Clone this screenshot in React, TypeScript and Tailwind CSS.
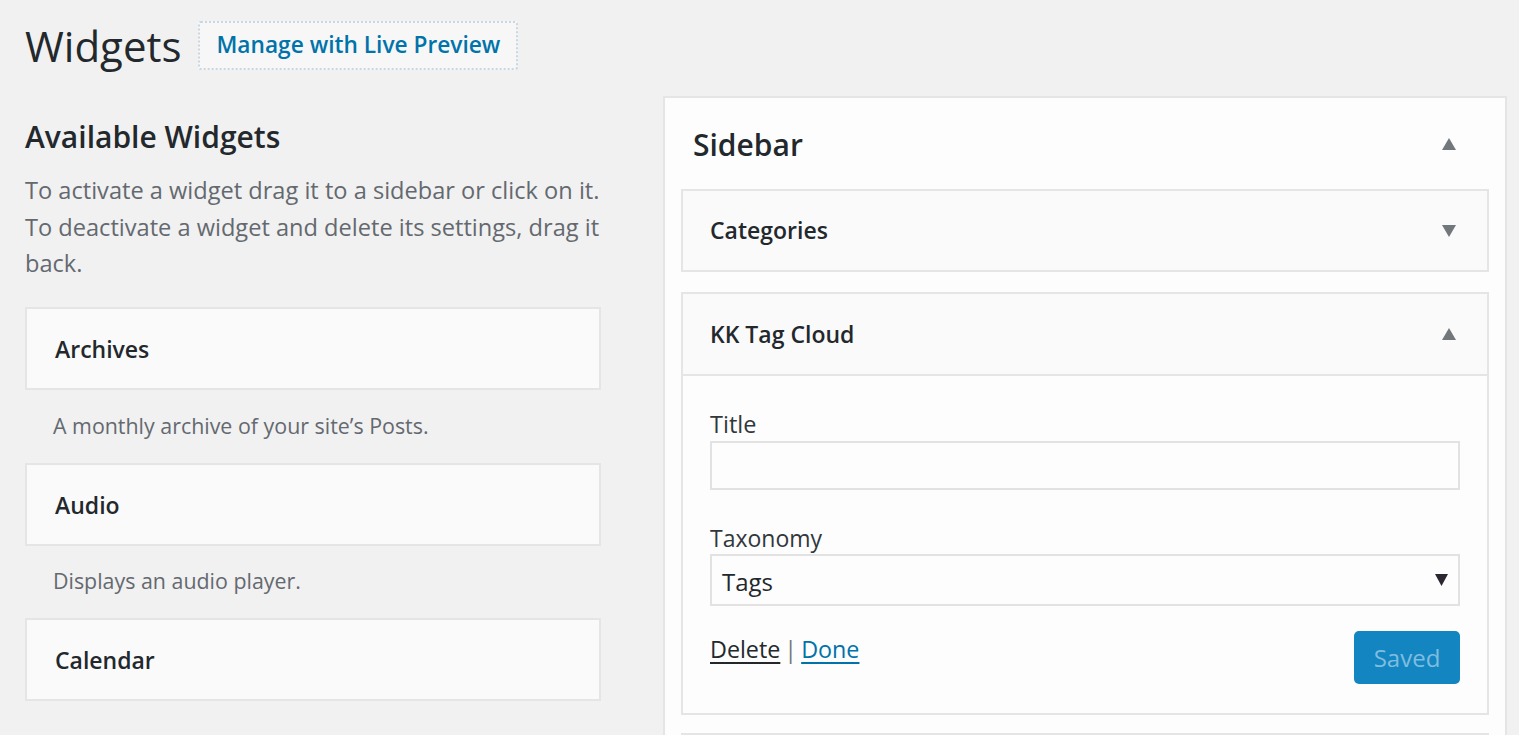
import React from 'react';

function Arrow({ up }: { up?: boolean }) {
  return (
    <svg width="14" height="12" viewBox="0 0 14 12" className="text-[#72777c]">
      {up ? <polygon points="7,0 14,12 0,12" fill="currentColor" /> : <polygon points="0,0 14,0 7,12" fill="currentColor" />}
    </svg>
  );
}

function WidgetCard({ title }: { title: string }) {
  return (
    <div className="h-[83px] border-2 border-[#e5e5e5] bg-[#fafafa] flex items-center px-[28px]">
      <h3 className="text-[23px] font-semibold text-[#23282d] pt-[2px]">{title}</h3>
    </div>
  );
}

export default function App() {
  return (
    <div className="min-h-screen bg-[#f1f1f1] text-[#23282d] font-['Segoe_UI','Open_Sans',sans-serif] overflow-hidden">
      {/* header */}
      <div className="flex items-center gap-[17px] pl-[25px] pt-[21px]">
        <h1 className="text-[42px] leading-[49px] font-normal text-[#23282d]">Widgets</h1>
        <button className="h-[49px] px-[16px] border-2 border-dotted border-[#c8d7e1] bg-[#f7f7f7] text-[#0073aa] text-[22.7px] font-semibold rounded-[3px]">
          Manage with Live Preview
        </button>
      </div>

      <div className="flex items-start">
        {/* available widgets */}
        <div className="w-[576px] ml-[25px] mt-[45px]">
          <h2 className="text-[30px] leading-[44px] font-semibold text-[#23282d]">Available Widgets</h2>
          <p className="mt-[13px] w-[600px] text-[23.6px] leading-[36.5px] text-[#646970]">
            To activate a widget drag it to a sidebar or click on it. To deactivate a widget and delete its settings, drag it back.
          </p>

          <div className="mt-[25px]">
            <WidgetCard title="Archives" />
            <p className="h-[73px] flex items-center pl-[28px] text-[21.4px] text-[#646970]">A monthly archive of your site’s Posts.</p>
            <WidgetCard title="Audio" />
            <p className="h-[72px] flex items-center pl-[28px] text-[21.4px] text-[#646970]">Displays an audio player.</p>
            <WidgetCard title="Calendar" />
          </div>
        </div>

        {/* sidebar panel */}
        <div className="ml-[62px] mt-[26px] w-[844px] border-2 border-[#e5e5e5] bg-[#fdfdfd] px-[16px] pb-[20px]">
          <div className="h-[91px] flex items-center justify-between pl-[12px] pr-[33px]">
            <h2 className="text-[30px] font-semibold text-[#23282d] pt-[2px]">Sidebar</h2>
            <Arrow up />
          </div>

          <div className="h-[83px] border-2 border-[#e5e5e5] bg-[#fafafa] flex items-center justify-between pl-[27px] pr-[31px]">
            <h3 className="text-[23px] font-semibold">Categories</h3>
            <Arrow />
          </div>

          <div className="mt-[20px] border-2 border-[#e5e5e5] bg-[#fdfdfd]">
            <div className="h-[82px] bg-[#fafafa] border-b-2 border-[#e5e5e5] flex items-center justify-between pl-[27px] pr-[31px]">
              <h3 className="text-[23px] font-semibold">KK Tag Cloud</h3>
              <Arrow up />
            </div>
            <div className="px-[27px] pt-[32px] pb-[29px]">
              <label className="block text-[23.5px] leading-[32px] text-[#32373c]">Title</label>
              <div className="mt-[1px] h-[49px] border-2 border-[#e2e2e2] bg-[#fdfdfd]" />

              <label className="block mt-[32px] text-[23px] leading-[32px] text-[#32373c]">Taxonomy</label>
              <div className="h-[52px] border-2 border-[#e2e2e2] bg-[#fdfdfd] flex items-center justify-between pl-[10px] pr-[10px]">
                <span className="text-[24px] text-[#23282d] pt-[4px]">Tags</span>
                <svg width="13" height="12" viewBox="0 0 13 12"><polygon points="0,0 13,0 6.5,12" fill="#2b2630" /></svg>
              </div>

              <div className="mt-[25px] flex items-start justify-between">
                <div className="mt-[3px] text-[23.3px] leading-[30px]">
                  <a className="underline decoration-2 underline-offset-4 text-[#23282d]">Delete</a>
                  <span className="text-[#72777c] mx-[4px]">|</span>
                  <a className="underline decoration-2 underline-offset-4 text-[#0073aa]">Done</a>
                </div>
                <button className="h-[53px] w-[106px] rounded-[5px] bg-[#1385c0] text-[#7fbde0] text-[24px]">Saved</button>
              </div>
            </div>
          </div>

          <div className="mt-[18px] h-[60px] border-2 border-[#e5e5e5] bg-[#fafafa]" />
        </div>
      </div>
    </div>
  );
}
